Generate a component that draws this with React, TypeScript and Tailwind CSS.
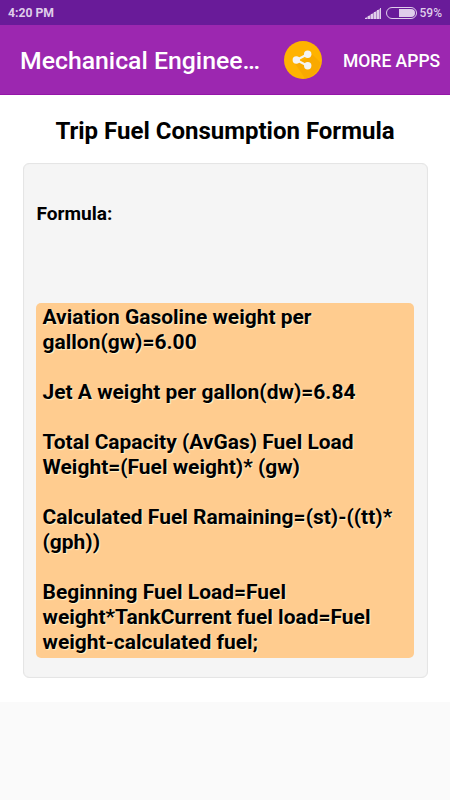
const formulas = [
  ["Aviation Gasoline weight per", "gallon(gw)=6.00"],
  ["Jet A weight per gallon(dw)=6.84"],
  ["Total Capacity (AvGas) Fuel Load", "Weight=(Fuel weight)* (gw)"],
  ["Calculated Fuel Ramaining=(st)-((tt)*", "(gph))"],
  ["Beginning Fuel Load=Fuel", "weight*TankCurrent fuel load=Fuel", "weight-calculated fuel;"],
];

function StatusBar() {
  return (
    <div className="flex h-[25px] items-center justify-between bg-[#691b99] px-2 text-[12px] font-medium text-[#dfcdea]">
      <span className="pt-px text-[12.200px] font-bold">4:20 PM</span>
      <div className="flex items-center pt-px">
        <svg className="mr-[5px] h-[11px] w-[16px]" viewBox="0 0 16 11" fill="#dfcdea">
          <path d="M0 11V10L16 0V11Z" opacity=".6" />
          <path d="M0 10h2v1H0zM3 8h2v3H3zM6 6h2v5H6zM9 4h2v7H9zM12 2h2v9h-2zM15 0h1v11h-1z" />
        </svg>
        <svg className="mr-[3px] h-[12px] w-[31px]" viewBox="0 0 31 12" fill="none">
          <rect x="0.500" y="0.500" width="30" height="11" rx="5.500" stroke="#dfcdea" />
          <path d="M13 2h12a4 4 0 0 1 0 8H13z" fill="#dfcdea" />
        </svg>
        <span className="text-[12px] font-medium">59%</span>
      </div>
    </div>
  );
}

function AppBar() {
  return (
    <header className="flex h-[70px] items-center border-b border-[#9416a8] bg-[#9c27b0] pl-5 text-white">
      <h1 className="w-[264px] whitespace-nowrap pt-[3px] text-[24.800px] font-medium">Mechanical Enginee…</h1>
      <svg className="mt-[1px] h-[38px] w-[38px] shrink-0" viewBox="0 0 38 38">
        <circle cx="19" cy="19" r="19" fill="#ffb300" />
        <path d="M26 11 36.500 21.500A19 19 0 0 1 21 37.500L10 21l13-3z" fill="#f9a900" />
        <path d="M23.500 13.300 12.500 19l11 5.700" stroke="#f4f4f4" strokeWidth="2.200" fill="none" />
        <g fill="#f4f4f4"><circle cx="23.700" cy="13.200" r="3.700" /><circle cx="12.300" cy="19" r="3.700" /><circle cx="23.700" cy="24.700" r="3.700" /></g>
      </svg>
      <span className="ml-[21px] whitespace-nowrap pt-[3px] text-[17.500px] font-medium">MORE APPS</span>
    </header>
  );
}

export default function App() {
  return (
    <div className="h-[800px] w-[450px] overflow-hidden bg-[#fafafa] font-['Roboto',sans-serif] text-black">
      <StatusBar />
      <AppBar />
      <main className="h-[607px] bg-white px-[22.500px] pt-[20px]">
        <h2 className="h-[47.500px] whitespace-nowrap text-center text-[24px] leading-[32px] font-bold">Trip Fuel Consumption Formula</h2>
        <section className="h-[515px] rounded-[6px] border border-[#e5e5e5] bg-[#f5f5f5] px-[12.500px] pt-[37px] shadow-[inset_0_0_1px_#e5e5e5]">
          <p className="h-[102px] pl-[0.500px] text-[19.100px] leading-[25px] font-bold">Formula:</p>
          <div className="flex h-[355px] flex-col gap-[25px] rounded-[5px] bg-[#ffcc8f] pt-[2px] pl-[6.500px] text-[20.970px] leading-[25px] font-bold [text-shadow:1px_1px_1px_#fff3c8]">
            {formulas.map((lines) => (
              <p key={lines[0]}>{lines.map((line) => <span key={line} className="block whitespace-nowrap">{line}</span>)}</p>
            ))}
          </div>
        </section>
      </main>
    </div>
  );
}
